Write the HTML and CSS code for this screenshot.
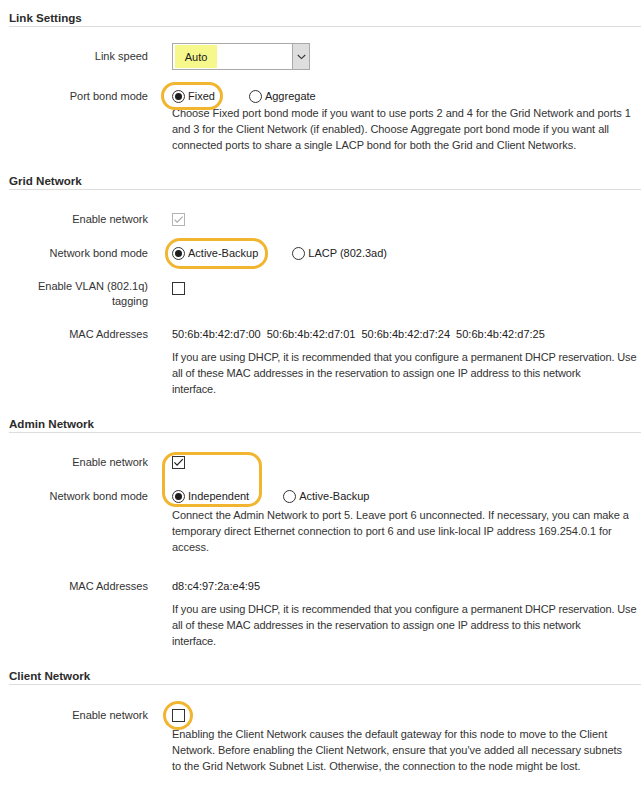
FILE: index.html
```html
<!DOCTYPE html>
<html lang="en">
<head>
<meta charset="utf-8">
<title>Network Configuration</title>
<link rel="stylesheet" href="styles.css">
</head>
<body>
<main class="page">

  <section class="section section-link">
    <h2 class="section-title">Link Settings</h2>
    <div class="field field-select">
      <div class="label">Link speed</div>
      <div class="control">
        <div class="select">
          <span class="select-value">Auto</span>
          <span class="select-btn">
            <svg width="9" height="6" viewBox="0 0 9 6"><path d="M0.8 1 L4.5 4.6 L8.2 1" fill="none" stroke="#333" stroke-width="1.1"/></svg>
          </span>
        </div>
      </div>
    </div>
    <div class="field">
      <div class="label">Port bond mode</div>
      <div class="control">
        <div class="options">
          <span class="option"><span class="radio checked"></span>Fixed<span class="hl hl-fixed"></span></span>
          <span class="option"><span class="radio"></span>Aggregate</span>
        </div>
        <p class="help help-1">Choose Fixed port bond mode if you want to use ports 2 and 4 for the Grid Network and ports 1 and 3 for the Client Network (if enabled). Choose Aggregate port bond mode if you want all connected ports to share a single LACP bond for both the Grid and Client Networks.</p>
      </div>
    </div>
  </section>

  <section class="section">
    <h2 class="section-title">Grid Network</h2>
    <div class="field field-first">
      <div class="label">Enable network</div>
      <div class="control">
        <span class="checkbox disabled"><svg width="13" height="13" viewBox="0 0 13 13"><path d="M2.6 6.6 L5.2 9.2 L10.6 3.6" fill="none" stroke="#a8a8a8" stroke-width="1.1"/></svg></span>
      </div>
    </div>
    <div class="field">
      <div class="label">Network bond mode</div>
      <div class="control">
        <div class="options">
          <span class="option"><span class="radio checked"></span>Active-Backup<span class="hl hl-ab"></span></span>
          <span class="option"><span class="radio"></span>LACP (802.3ad)</span>
        </div>
      </div>
    </div>
    <div class="field">
      <div class="label label-wrap">Enable VLAN (802.1q) tagging</div>
      <div class="control">
        <span class="checkbox checkbox-vlan"></span>
      </div>
    </div>
    <div class="field field-mac">
      <div class="label">MAC Addresses</div>
      <div class="control">
        <div class="macs">
          <span>50:6b:4b:42:d7:00</span>
          <span>50:6b:4b:42:d7:01</span>
          <span>50:6b:4b:42:d7:24</span>
          <span>50:6b:4b:42:d7:25</span>
        </div>
        <p class="help help-mac">If you are using DHCP, it is recommended that you configure a permanent DHCP reservation. Use all of these MAC addresses in the reservation to assign one IP address to this network<br>interface.</p>
      </div>
    </div>
  </section>

  <section class="section">
    <h2 class="section-title">Admin Network</h2>
    <div class="field field-first">
      <div class="label">Enable network</div>
      <div class="control">
        <span class="checkbox"><svg width="13" height="13" viewBox="0 0 13 13"><path d="M2.4 6.4 L5.1 9.2 L10.8 3.2" fill="none" stroke="#222" stroke-width="1.2"/></svg></span>
        <span class="hl hl-admin"></span>
      </div>
    </div>
    <div class="field">
      <div class="label">Network bond mode</div>
      <div class="control">
        <div class="options">
          <span class="option"><span class="radio checked"></span>Independent</span>
          <span class="option"><span class="radio"></span>Active-Backup</span>
        </div>
        <p class="help help-3">Connect the Admin Network to port 5. Leave port 6 unconnected. If necessary, you can make a temporary direct Ethernet connection to port 6 and use link-local IP address 169.254.0.1 for access.</p>
      </div>
    </div>
    <div class="field field-mac-2">
      <div class="label">MAC Addresses</div>
      <div class="control">
        <div class="macs"><span>d8:c4:97:2a:e4:95</span></div>
        <p class="help help-mac">If you are using DHCP, it is recommended that you configure a permanent DHCP reservation. Use all of these MAC addresses in the reservation to assign one IP address to this network<br>interface.</p>
      </div>
    </div>
  </section>

  <section class="section">
    <h2 class="section-title">Client Network</h2>
    <div class="field field-client">
      <div class="label">Enable network</div>
      <div class="control">
        <span class="checkbox"></span>
        <span class="hl hl-client"></span>
        <p class="help help-4">Enabling the Client Network causes the default gateway for this node to move to the Client Network. Before enabling the Client Network, ensure that you've added all necessary subnets to the Grid Network Subnet List. Otherwise, the connection to the node might be lost.</p>
      </div>
    </div>
  </section>

</main>
</body>
</html>
```

FILE: styles.css
```css
html, body {
  margin: 0;
  padding: 0;
  background: #ffffff;
  overflow-x: hidden;
}

body {
  font-family: "Liberation Sans", Arial, sans-serif;
  font-size: 11px;
  line-height: 16px;
  color: #333333;
}

.page {
  width: 641px;
}

.section {
  margin-bottom: 9px;
}

.section-link {
  margin-bottom: 10px;
}

.section-title {
  margin: 0 0 0 9px;
  padding-top: 10px;
  font-size: 11.6px;
  font-weight: bold;
  line-height: 16px;
  color: #2b2b2b;
  border-bottom: 1px solid #dddddd;
}

.field {
  display: grid;
  grid-template-columns: 139px 469px;
  column-gap: 24px;
  margin-left: 9px;
  margin-top: 18px;
}

.field-select { margin-top: 16px; }
.field-first { margin-top: 21px; }
.field-mac { margin-top: 17px; }
.field-mac-2 { margin-top: 23px; }
.field-client { margin-top: 22px; }

.label {
  text-align: right;
  line-height: 16px;
}

.field-select .label {
  line-height: 27px;
}

.label-wrap {
  line-height: 15px;
}

.control {
  position: relative;
  min-height: 16px;
}

/* select */
.select {
  box-sizing: border-box;
  width: 138px;
  height: 27px;
  border: 1px solid #a9a9a9;
  background: #ffffff;
  display: flex;
  align-items: stretch;
  justify-content: space-between;
}

.select-value {
  margin: 1px 0 1px 2px;
  width: 42px;
  background: #f6f88c;
  display: flex;
  align-items: center;
  justify-content: center;
  font-size: 11px;
  color: #222;
}

.select-btn {
  width: 16px;
  background: #dedede;
  border-left: 1px solid #a9a9a9;
  display: flex;
  align-items: center;
  justify-content: center;
}

/* radios */
.options {
  display: flex;
  gap: 34px;
  height: 16px;
}

.option {
  position: relative;
  display: inline-flex;
  align-items: center;
  gap: 3px;
  white-space: nowrap;
  color: #222;
}

.radio {
  box-sizing: border-box;
  width: 13px;
  height: 13px;
  border: 1px solid #333333;
  border-radius: 50%;
  background: #fff;
  display: inline-flex;
  align-items: center;
  justify-content: center;
  margin-top: 1px;
}

.radio.checked::after {
  content: "";
  width: 7px;
  height: 7px;
  border-radius: 50%;
  background: #1e1e1e;
}

/* checkbox */
.checkbox {
  box-sizing: border-box;
  display: block;
  width: 13px;
  height: 13px;
  margin-top: 2px;
  border: 1px solid #333333;
  background: #fff;
  position: relative;
}

.checkbox svg {
  position: absolute;
  left: -1px;
  top: -1px;
}

.checkbox.disabled {
  border-color: #b4b4b4;
}

.checkbox-vlan {
  margin-top: 3px;
}

/* text */
.macs {
  display: flex;
  gap: 6px;
  color: #222;
}

.help {
  margin: 0;
  letter-spacing: -0.05px;
}

.help-1 { margin-top: 1px; }
.help-3 { margin-top: 3px; }
.help-4 { margin-top: 4px; max-width: 458px; }
.help-mac { margin-top: 7px; letter-spacing: -0.13px; }

/* highlight annotations */
.hl {
  position: absolute;
  box-sizing: border-box;
  border: 3px solid #f1b530;
  pointer-events: none;
}

.hl-fixed {
  left: -11px;
  top: -6px;
  width: 62px;
  height: 28px;
  border-radius: 14px;
}

.hl-ab {
  left: -7px;
  top: -7px;
  width: 103px;
  height: 31px;
  border-radius: 15px;
}

.hl-admin {
  left: -10px;
  top: -2px;
  width: 100px;
  height: 55px;
  border-radius: 14px;
}

.hl-client {
  left: -9px;
  top: -6px;
  width: 30px;
  height: 29px;
  border-radius: 50%;
}
```
